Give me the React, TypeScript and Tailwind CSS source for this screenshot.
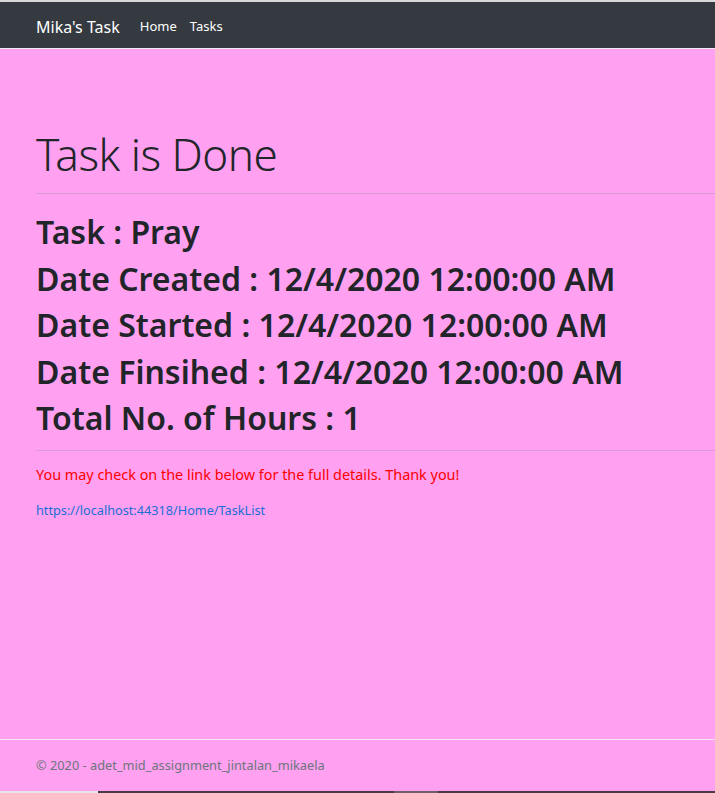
import React from "react"

const lines = [
  "Task : Pray",
  "Date Created : 12/4/2020 12:00:00 AM",
  "Date Started : 12/4/2020 12:00:00 AM",
  "Date Finsihed : 12/4/2020 12:00:00 AM",
  "Total No. of Hours : 1",
]

export default function App() {
  return (
    <div
      className="w-[715px] h-[793px] flex flex-col overflow-hidden bg-[#ffa1f0] text-[#212529]"
      style={{ fontFamily: '"Noto Sans", "Open Sans", sans-serif' }}
    >
      <div className="h-[2px] bg-[#d9d9d9]" />

      {/* navbar */}
      <nav className="h-[47px] shrink-0 flex items-center gap-[20px] px-[36px] pt-[3px] bg-[#343a40] border-b border-[#f4e8f2]">
        <span className="text-[16px] text-white">Mika's Task</span>
        <div className="flex items-center gap-[13px] text-[13px] text-white">
          <span>Home</span>
          <span>Tasks</span>
        </div>
      </nav>

      {/* main */}
      <main className="flex-1 pl-[36px] pt-[76px]">
        <h1 className="text-[44px] font-light leading-[58px] tracking-[-0.5px]">Task is Done</h1>
        <hr className="mt-[10px] mb-[19px] border-t border-[#d99ad4]" />
        {lines.map((line) => (
          <h2 key={line} className="text-[32px] font-semibold leading-[38.5px] mb-[8px]">
            {line}
          </h2>
        ))}
        <hr className="mt-[12px] border-t border-[#d99ad4]" />
        <p className="mt-[13px] text-[14.4px] leading-[22px] text-[#ff0000]">
          You may check on the link below for the full details. Thank you!
        </p>
        <a className="block mt-[14px] text-[12.7px] leading-[20px] text-[#1a6ed6]" href="#">
          https://localhost:44318/Home/TaskList
        </a>
      </main>

      {/* footer */}
      <footer className="h-[52px] shrink-0 border-t border-[#f8e6f4] pl-[36px] flex items-center">
        <span className="text-[12.8px] text-[#6c757d]">© 2020 - adet_mid_assignment_jintalan_mikaela</span>
      </footer>

      <div className="h-[2px] shrink-0 flex">
        <div className="w-[98px] bg-[#e6e6e6]" />
        <div className="w-[296px] bg-[#4a3a45]" />
        <div className="w-[44px] bg-[#6e5f69]" />
        <div className="flex-1 bg-[#4a3a45]" />
      </div>
    </div>
  )
}
